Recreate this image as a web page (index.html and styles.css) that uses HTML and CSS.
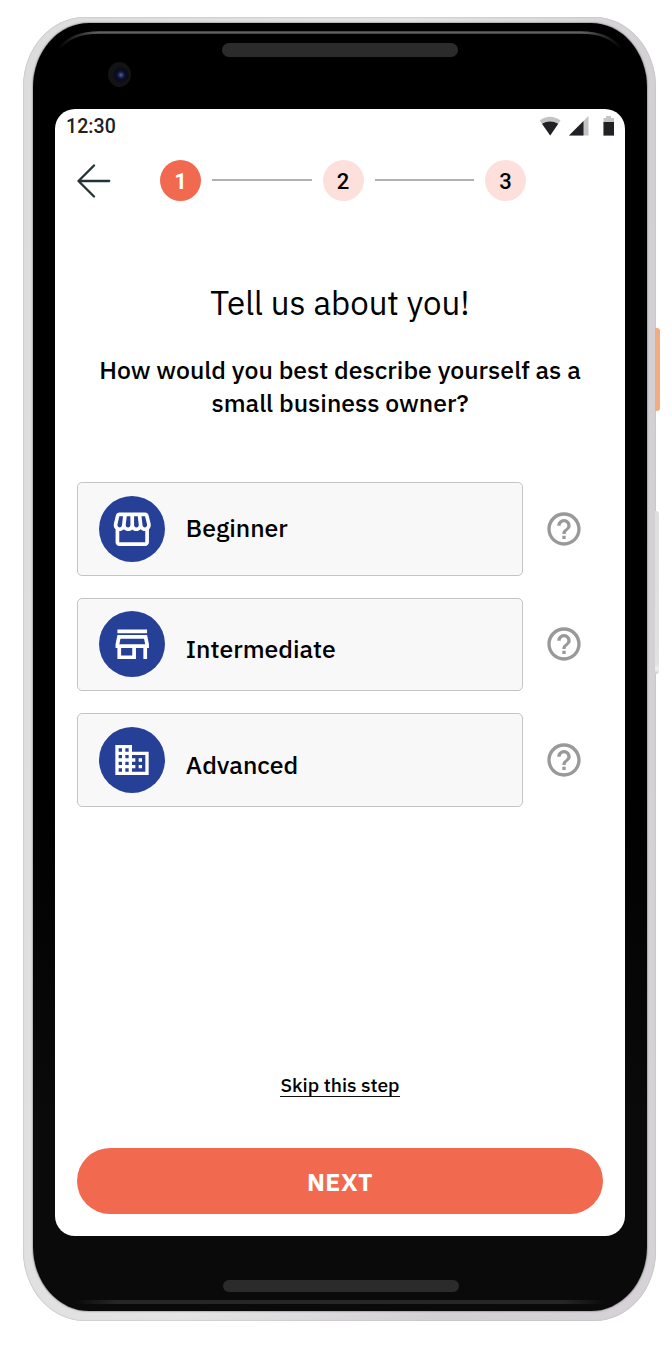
FILE: index.html
```html
<!DOCTYPE html>
<html lang="en">
<head>
<meta charset="utf-8">
<title>Tell us about you</title>
<link rel="stylesheet" href="styles.css">
</head>
<body>
<div class="phone">
  <span class="side-button power"></span>
  <span class="side-button volume"></span>
  <div class="bezel">
    <div class="bezel-top">
      <svg class="edge" width="614" height="60" viewBox="0 0 614 60" fill="none">
        <defs>
          <linearGradient id="shine" x1="25" x2="589" y1="0" y2="0" gradientUnits="userSpaceOnUse">
            <stop offset="0" stop-color="#555" stop-opacity="0"/><stop offset=".07" stop-color="#606060"/>
            <stop offset=".93" stop-color="#606060"/><stop offset="1" stop-color="#555" stop-opacity="0"/>
          </linearGradient>
        </defs>
        <path d="M25 26C36 14 48 9.500 66 9.500H548C566 9.500 578 14 589 26" stroke="url(#shine)" stroke-width="2.500"/>
      </svg>
      <span class="camera"></span>
      <span class="speaker"></span>
    </div>
    <main class="screen">
      <header class="status">
        <span class="time">12:30</span>
        <svg class="status-icons" width="76" height="22" viewBox="0 0 76 22">
          <path fill="#c4c4c4" d="M.7 4.500Q11 -3 21.500 4.500L11.200 19.500Z"/>
          <path fill="#202124" d="M3 7.800Q11 3.300 19.200 7.800L11.200 19.500Z"/>
          <path fill="#c4c4c4" d="M49.500 0V19.500H30Z"/>
          <path fill="#202124" d="M44.500 5V19.500H30Z"/>
          <path fill="#c4c4c4" d="M67 0h5v2h3v17.700h-10.500V2H67z"/>
          <path fill="#202124" d="M64.500 6H75v13.500H64.500z"/>
        </svg>
      </header>
      <nav class="steps">
        <svg class="back" width="34" height="36" viewBox="0 0 34 36" fill="none" stroke="#263238" stroke-width="2.300" stroke-linecap="round" stroke-linejoin="round"><path d="M32.200 18H1.500M17 2.500L1.500 18L17 33.500"/></svg>
        <span class="step active">1</span>
        <span class="line"></span>
        <span class="step">2</span>
        <span class="line"></span>
        <span class="step">3</span>
      </nav>
      <h1 class="title">Tell us about you!</h1>
      <p class="question">How would you best describe yourself as a<br>small business owner?</p>
      <section class="options">
        <div class="option">
          <button class="card">
            <span class="badge"><svg width="44.500" height="44.500" viewBox="0 0 24 24" fill="#fff"><path d="M21.900 8.890l-1.050-4.370c-.22-.9-1-1.520-1.910-1.520H5.050c-.9 0-1.690.63-1.900 1.520L2.100 8.890c-.24 1.020-.02 2.060.62 2.880.08.11.19.19.28.29V19c0 1.100.9 2 2 2h14c1.100 0 2-.9 2-2v-6.940c.09-.09.2-.18.28-.28.64-.82.87-1.870.62-2.890zM18.910 4.990l1.050 4.370c.1.42.01.84-.25 1.170-.14.18-.44.47-.94.47-.61 0-1.140-.49-1.210-1.140L16.980 5l1.930-.01zM13 5h1.960l.54 4.520c.05.39-.07.78-.33 1.070-.22.26-.54.41-.95.41-.67 0-1.220-.59-1.220-1.310V5zM8.490 9.520L9.040 5H11v4.690c0 .72-.55 1.310-1.290 1.310-.34 0-.65-.15-.89-.41-.25-.29-.37-.68-.33-1.070zM4.040 9.360L5.050 5h1.970l-.58 4.860c-.08.65-.6 1.140-1.210 1.140-.49 0-.8-.29-.93-.47-.27-.32-.36-.75-.26-1.170zM5 19v-6.030c.08.01.15.03.23.03.87 0 1.660-.36 2.240-.95.6.6 1.400.95 2.310.95.87 0 1.650-.36 2.230-.93.59.57 1.390.93 2.290.93.84 0 1.640-.35 2.240-.95.58.59 1.370.95 2.240.95.08 0 .15-.02.23-.03V19H5z"/></svg></span>
            <span class="label high">Beginner</span>
          </button>
          <svg class="help" viewBox="0 0 24 24"><path d="M11 18h2v-2h-2v2zm1-16C6.480 2 2 6.480 2 12s4.480 10 10 10 10-4.480 10-10S17.520 2 12 2zm0 18c-4.410 0-8-3.590-8-8s3.590-8 8-8 8 3.590 8 8-3.590 8-8 8zm0-14c-2.210 0-4 1.790-4 4h2c0-1.100.9-2 2-2s2 .9 2 2c0 2-3 1.750-3 5h2c0-2.250 3-2.500 3-5 0-2.210-1.790-4-4-4z"/></svg>
        </div>
        <div class="option">
          <button class="card">
            <span class="badge"><svg width="44.500" height="44.500" viewBox="0 0 24 24" fill="#fff"><path d="M18.360 9l.6 3H5.040l.6-3h12.720M20 4H4v2h16V4zm0 3H4l-1 5v2h1v6h10v-6h4v6h2v-6h1v-2l-1-5zM6 18v-4h6v4H6z"/></svg></span>
            <span class="label low">Intermediate</span>
          </button>
          <svg class="help" viewBox="0 0 24 24"><path d="M11 18h2v-2h-2v2zm1-16C6.480 2 2 6.480 2 12s4.480 10 10 10 10-4.480 10-10S17.520 2 12 2zm0 18c-4.410 0-8-3.590-8-8s3.590-8 8-8 8 3.590 8 8-3.590 8-8 8zm0-14c-2.210 0-4 1.790-4 4h2c0-1.100.9-2 2-2s2 .9 2 2c0 2-3 1.750-3 5h2c0-2.250 3-2.500 3-5 0-2.210-1.790-4-4-4z"/></svg>
        </div>
        <div class="option">
          <button class="card">
            <span class="badge"><svg width="40" height="40" viewBox="0 0 24 24" fill="#fff"><path d="M12 7V3H2v18h20V7H12zM6 19H4v-2h2v2zm0-4H4v-2h2v2zm0-4H4V9h2v2zm0-4H4V5h2v2zm4 12H8v-2h2v2zm0-4H8v-2h2v2zm0-4H8V9h2v2zm0-4H8V5h2v2zm10 12h-8v-2h2v-2h-2v-2h2v-2h-2V9h8v10zm-2-8h-2v2h2v-2zm0 4h-2v2h2v-2z"/></svg></span>
            <span class="label low">Advanced</span>
          </button>
          <svg class="help" viewBox="0 0 24 24"><path d="M11 18h2v-2h-2v2zm1-16C6.480 2 2 6.480 2 12s4.480 10 10 10 10-4.480 10-10S17.520 2 12 2zm0 18c-4.410 0-8-3.590-8-8s3.590-8 8-8 8 3.590 8 8-3.590 8-8 8zm0-14c-2.210 0-4 1.790-4 4h2c0-1.100.9-2 2-2s2 .9 2 2c0 2-3 1.750-3 5h2c0-2.250 3-2.500 3-5 0-2.210-1.790-4-4-4z"/></svg>
        </div>
      </section>
      <footer class="actions">
        <a class="skip">Skip this step</a>
        <button class="next">NEXT</button>
      </footer>
    </main>
    <div class="bezel-bottom">
      <span class="speaker lower"></span>
      <span class="edge-line"></span>
    </div>
  </div>
</div>
</body>
</html>
```
FILE: styles.css
```css
* { box-sizing: border-box; }
body {
  margin: 0;
  height: 1348px;
  padding: 17px 0 0 23px;
  background: #fff;
  color: #000;
  font-family: "IBM Plex Sans", Roboto, "Liberation Sans", sans-serif;
}
button { font: inherit; color: inherit; border: 0; margin: 0; }
.phone {
  position: relative;
  width: 633px;
  height: 1304px;
  padding: 6px 9px 10px 10px;
  border-radius: 62px / 70px;
  background: linear-gradient(100deg, #dcdcdc 0%, #e4e4e4 45%, #d3d0d4 75%, #d6d2d7 100%);
  box-shadow: inset 0 0 1px 0.5px #c2c0c3;
}
.side-button { position: absolute; left: 632px; border-radius: 0 3px 3px 0; }
.power { top: 311px; width: 5px; height: 83px; background: #f0ac82; }
.volume { top: 494px; width: 4px; height: 163px; background: linear-gradient(#dedede, #e2e2e2 94%, #f3f3f3 97%, #ccc); }
.bezel {
  position: relative;
  height: 1288px;
  padding: 0 22px;
  border-radius: 56px / 64px;
  background: linear-gradient(#000 60%, #0a0a0a 85%);
  box-shadow: 0 0 2px #444;
}
.bezel-top { height: 86px; }
.edge { position: absolute; left: 0; top: 0; }
.camera {
  position: absolute; left: 75px; top: 39px; width: 23px; height: 25px;
  border-radius: 50%;
  background: radial-gradient(circle at 13px 13px, #50678f 0, #26335c 2px, #0b0e2b 4px, #090b1c 7px, #131313 8px);
}
.speaker {
  position: absolute; left: 189px; top: 20px; width: 236px; height: 14px;
  border-radius: 7px; background: #2b2b2b;
}
.bezel-bottom .lower { left: 190px; top: 1257px; height: 12px; }
.edge-line {
  position: absolute; left: 42px; right: 42px; top: 1277px; height: 4px;
  background: linear-gradient(90deg, #0a0a0a, #272727 8%, #272727 92%, #0a0a0a);
}
.screen {
  display: flex;
  flex-direction: column;
  width: 570px;
  height: 1127px;
  padding: 0 22px 22px;
  border-radius: 20px;
  background: #fff;
}
.status {
  display: flex;
  justify-content: space-between;
  align-items: flex-start;
  height: 51px;
  margin: 0 -12px 0 -11px;
  padding-top: 7px;
}
.time { font: 500 19.5px/22px Roboto, sans-serif; color: #202124; letter-spacing: 0.1px; }
.status-icons { margin: 0; }
.steps { display: flex; align-items: center; height: 41px; }
.back { margin-right: 49px; }
.step {
  width: 41px; height: 41px; border-radius: 50%;
  background: #fde0dc;
  font-family: Roboto, sans-serif;
  font-weight: 500; font-size: 22px; line-height: 43px; text-align: center;
}
.active { background: #f1694f; color: #fff; font-weight: 700; }
.line { width: 99.5px; height: 2px; margin: -1px 11px 0; background: #b0b0b0; }
.title {
  margin: 78px 0 0;
  font-size: 33px; line-height: 48px; font-weight: 400;
  text-align: center; white-space: nowrap;
}
.question {
  margin: 27px -10px 0;
  font-size: 24.8px; line-height: 33px; font-weight: 500;
  text-align: center; white-space: nowrap;
}
.options { display: grid; gap: 22px; margin-top: 62px; }
.option { display: flex; align-items: center; height: 93.5px; gap: 21.2px; }
.card {
  display: flex;
  align-items: center;
  width: 446px; height: 93.5px;
  padding: 0 0 0 21.3px;
  gap: 20.5px;
  border: 1.3px solid #c4c4c4;
  border-radius: 5px;
  background: #f8f8f8;
  font-size: 24.8px; font-weight: 500; line-height: 30px;
}
.badge {
  display: grid; place-items: center;
  width: 66px; height: 66px; border-radius: 50%;
  background: #263f97;
}
.high { padding-bottom: 2px; }
.low { padding-top: 10px; }
.help { width: 40px; height: 40px; fill: #999; }
.actions { display: flex; flex-direction: column; align-items: center; margin-top: auto; }
.skip {
  font-size: 19.3px; line-height: 22px; font-weight: 500;
  border-bottom: 1.5px solid #111;
}
.next {
  width: 526px; height: 66px; margin-top: 51px; padding-top: 3px;
  border-radius: 33px;
  background: #f1694f; color: #fff;
  font-size: 24.8px; font-weight: 700; letter-spacing: 0.5px;
}
```
